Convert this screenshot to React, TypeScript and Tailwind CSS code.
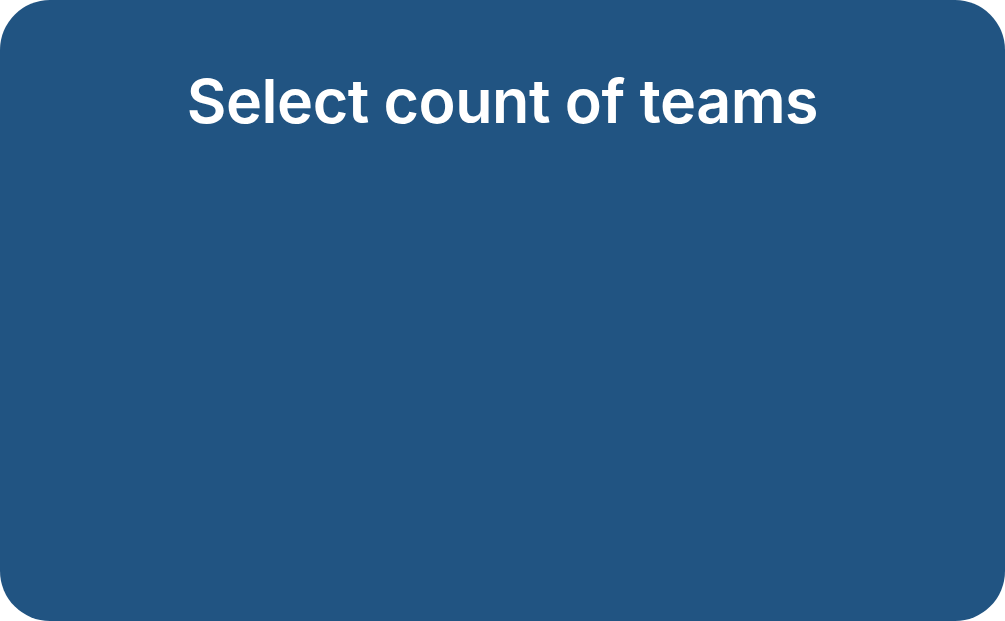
export default function App() {
  return (
    <div className="w-[1005px] h-[621px] bg-white">
      <div className="h-full w-full rounded-[50px] bg-[#215482] flex flex-col items-center pt-[63px]">
        <h1 className="font-['Inter',sans-serif] font-semibold text-[61px] leading-[76px] text-white tracking-[-0.5px]">
          Select count of teams
        </h1>
      </div>
    </div>
  );
}
